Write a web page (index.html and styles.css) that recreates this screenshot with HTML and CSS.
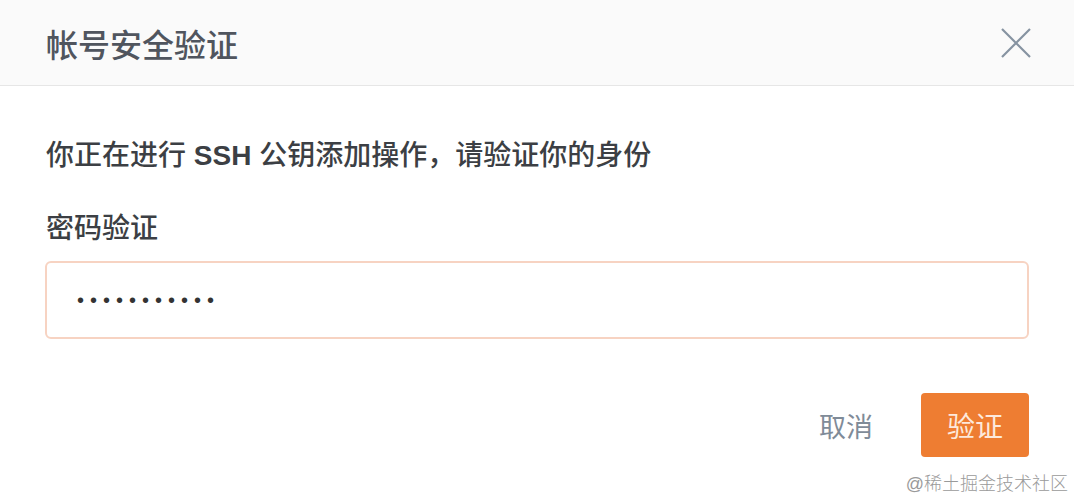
FILE: index.html
```html
<!DOCTYPE html>
<html lang="zh-CN">
<head>
    <meta charset="UTF-8">
    <meta name="viewport" content="width=device-width, initial-scale=1.0">
    <title>帐号安全验证</title>
    <link rel="stylesheet" href="styles.css">
</head>
<body>
    <div class="dialog">
        <div class="dialog-header">
            <h2 class="dialog-title">帐号安全验证</h2>
            <button class="close-btn" type="button" aria-label="关闭">
                <svg width="30" height="30" viewBox="0 0 30 30">
                    <path d="M1 1 L29 29 M29 1 L1 29" stroke="#8693a1" stroke-width="2.2" fill="none"/>
                </svg>
            </button>
        </div>

        <div class="dialog-body">
            <p class="message">你正在进行 <span class="latin">SSH</span> 公钥添加操作，请验证你的身份</p>
            <label class="field-label" for="password">密码验证</label>
            <input type="password" id="password" class="password-input" value="12345678901">
        </div>

        <div class="dialog-footer">
            <button type="button" class="btn-cancel">取消</button>
            <button type="button" class="btn-primary">验证</button>
        </div>

        <div class="watermark">@稀土掘金技术社区</div>
    </div>
</body>
</html>
```

FILE: styles.css
```css
body {
    margin: 0;
    padding: 0;
    background-color: #fff;
    font-family: "Liberation Sans", "Noto Sans CJK SC", sans-serif;
}
.dialog {
    position: relative;
    width: 1074px;
    height: 500px;
    background-color: #fff;
}
.dialog-header {
    height: 85px;
    display: flex;
    align-items: center;
    justify-content: space-between;
    padding: 0 43px 0 46px;
    background-color: #fafafa;
    border-bottom: 1px solid #e6e6e6;
}
.dialog-title {
    margin: 0;
    font-size: 32px;
    font-weight: 500;
    color: #50555e;
}
.close-btn {
    display: flex;
    padding: 0;
    border: none;
    background: none;
    cursor: pointer;
}
.dialog-body {
    padding: 50px 45px 0 45px;
}
.message {
    margin: 0 0 0 1px;
    font-size: 28px;
    line-height: 40px;
    font-weight: 500;
    color: #3c3f44;
}
.message .latin {
    font-weight: 700;
}
.field-label {
    display: block;
    margin: 33px 0 0 1px;
    font-size: 28px;
    line-height: 40px;
    font-weight: 500;
    color: #3c3f44;
}
.password-input {
    display: block;
    box-sizing: border-box;
    width: 984px;
    height: 78px;
    margin-top: 12px;
    padding: 0 30px;
    border: 2px solid #f7d3c2;
    border-radius: 6px;
    font-family: "Liberation Sans", sans-serif;
    font-size: 20px;
    letter-spacing: 6px;
    color: #333;
    outline: none;
}
.dialog-footer {
    display: flex;
    justify-content: flex-end;
    align-items: center;
    gap: 48px;
    padding: 54px 45px 0 0;
}
.btn-cancel {
    padding: 0;
    border: none;
    background: none;
    font-family: inherit;
    font-size: 27px;
    color: #7f8b98;
    cursor: pointer;
}
.btn-primary {
    width: 108px;
    height: 64px;
    border: none;
    border-radius: 4px;
    background-color: #ee7d32;
    font-family: inherit;
    font-size: 28px;
    color: #fde9dc;
    cursor: pointer;
}
.watermark {
    position: absolute;
    right: 6px;
    bottom: 5px;
    font-size: 18px;
    font-weight: 300;
    color: #9a9a9a;
}
```
